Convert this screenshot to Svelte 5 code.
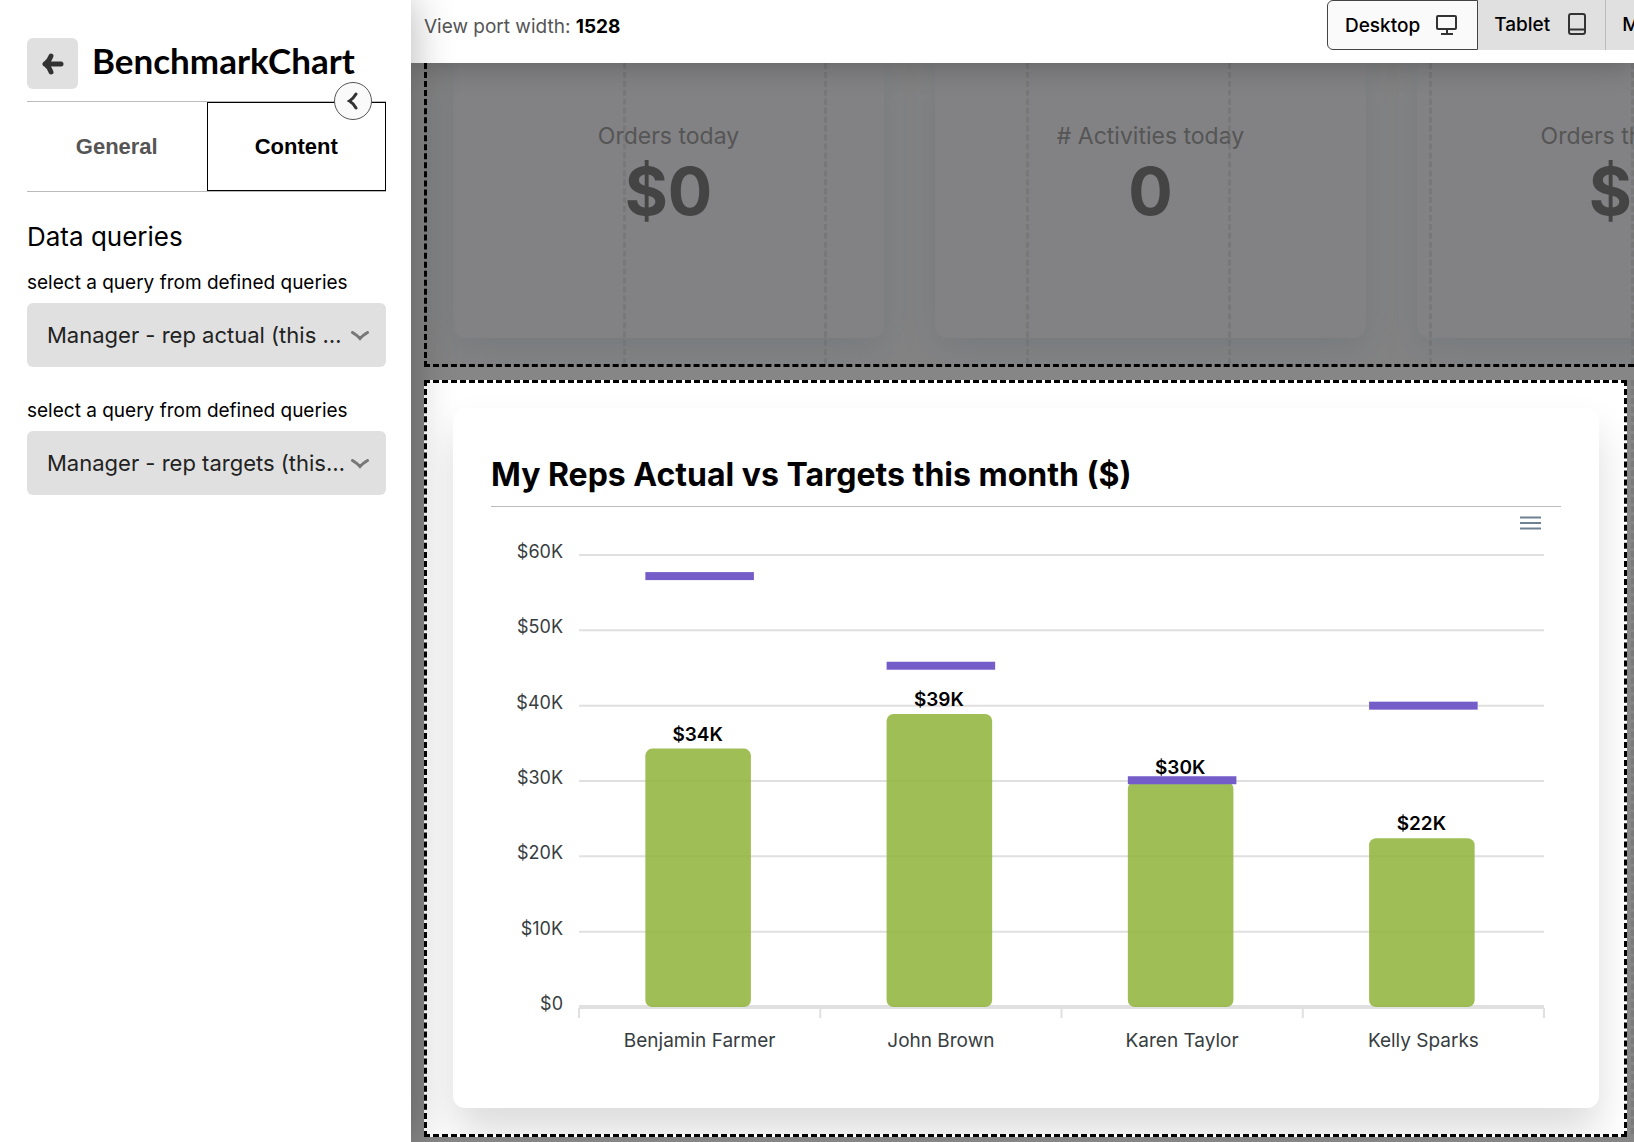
<script>
	const tabs = ['General', 'Content'];
	const devices = ['Desktop', 'Tablet', 'Mobile'];

	const queries = ['Manager - rep actual (this month)', 'Manager - rep targets (this month)'];

	const stats = [
		{ label: 'Orders today', value: '$0' },
		{ label: '# Activities today', value: '0' },
		{ label: 'Orders this week', value: '$0' }
	];

	const reps = [
		{ name: 'Benjamin Farmer', actual: 34.3, target: 57.2 },
		{ name: 'John Brown', actual: 38.9, target: 45.3 },
		{ name: 'Karen Taylor', actual: 29.9, target: 30.1 },
		{ name: 'Kelly Sparks', actual: 22.4, target: 40 }
	];

	const plot = { left: 88, right: 17, top: 48, bottom: 500, height: 563 };
	const maxValue = 60;
	const gridValues = [60, 50, 40, 30, 20, 10, 0];

	let activeTab = $state('Content');
	let device = $state('Desktop');
	let selected = $state([queries[0], queries[1]]);
	let chartWidth = $state(1069);

	let plotWidth = $derived(chartWidth - plot.left - plot.right);
	let step = $derived(plotWidth / reps.length);
	let barWidth = $derived(step * 0.45);

	function y(value) {
		return plot.bottom - (value / maxValue) * (plot.bottom - plot.top);
	}

	function barX(i) {
		return plot.left + i * step + (step - barWidth) / 2;
	}
</script>

<div class="app">
	<aside class="sidebar">
		<header class="sidebar-header">
			<button class="back" aria-label="Back">
				<svg width="24" height="24" viewBox="0 0 24 24">
					<path d="M20 12H4M10 4Q8 9.500 4 12Q8 14.500 10 20" />
				</svg>
			</button>
			<h1>BenchmarkChart</h1>
		</header>

		<div class="tabs" role="tablist">
			{#each tabs as tab}
				<button
					class="tab"
					class:active={activeTab === tab}
					role="tab"
					aria-selected={activeTab === tab}
					onclick={() => (activeTab = tab)}>{tab}</button
				>
			{/each}
			<button class="collapse" aria-label="Collapse panel">
				<svg width="12" height="18" viewBox="0 0 12 18">
					<path d="M9 2Q6 7 2.500 9Q6 11 9 16" />
				</svg>
			</button>
		</div>

		<h2>Data queries</h2>
		{#each selected as _, i}
			<div class="field">
				<label for="query-{i}">select a query from defined queries</label>
				<div class="select-wrap">
					<select id="query-{i}" bind:value={selected[i]}>
						{#each queries as query}
							<option>{query}</option>
						{/each}
					</select>
					<svg class="chevron" width="18" height="10" viewBox="0 0 18 10">
						<path d="M1.500 1.500Q6.500 4.500 9 7.500Q11.500 4.500 16.500 1.500" />
					</svg>
				</div>
			</div>
		{/each}
	</aside>

	<main class="main">
		<div class="topbar">
			<p>View port width: <strong>1528</strong></p>
			<div class="devices">
				{#each devices as name}
					<button class="device" class:active={device === name} onclick={() => (device = name)}>
						{name}
						{#if name === 'Desktop'}
							<svg width="22" height="22" viewBox="0 0 22 22">
								<rect x="1" y="2" width="19" height="13" rx="1" />
								<path d="M11 15v5M5 20h12" />
							</svg>
						{:else if name === 'Tablet'}
							<svg width="22" height="22" viewBox="0 0 22 22">
								<rect x="3" y="1" width="16" height="20" rx="2" />
								<path d="M3 16.500h16" />
							</svg>
						{:else}
							<svg width="22" height="22" viewBox="0 0 22 22">
								<rect x="5" y="1" width="12" height="20" rx="2" />
							</svg>
						{/if}
					</button>
				{/each}
			</div>
		</div>

		<div class="canvas">
			<div class="row">
				<section class="block dimmed">
					{#each stats as stat}
						<div class="card stat">
							<span class="stat-label">{stat.label}</span>
							<span class="stat-value">{stat.value}</span>
						</div>
					{/each}
				</section>
				<div class="columns" aria-hidden="true">
					{#each Array(6) as _}<i></i>{/each}
				</div>
			</div>

			<div class="row">
				<div class="columns" aria-hidden="true">
					{#each Array(6) as _}<i></i>{/each}
				</div>
				<section class="block selected">
					<div class="card chart-card">
						<h3>My Reps Actual vs Targets this month ($)</h3>
						<div class="chart" bind:clientWidth={chartWidth}>
							<button class="chart-menu" aria-label="Chart menu">
								<svg width="24" height="18" viewBox="0 0 24 18">
									<path d="M1 3.500h21M1 9h21M1 14.500h21" />
								</svg>
							</button>
							<svg width={chartWidth} height={plot.height} role="img" aria-label="Actual vs targets">
								{#each gridValues as value}
									<line
										class="grid"
										class:base={value === 0}
										x1={plot.left}
										x2={plot.left + plotWidth}
										y1={y(value)}
										y2={y(value)}
									/>
									<text class="axis" x={plot.left - 16} y={y(value) + 3} text-anchor="end"
										>${value}{value ? 'K' : ''}</text
									>
								{/each}
								{#each Array(reps.length + 1) as _, i}
									<line
										class="tick"
										x1={plot.left + i * step}
										x2={plot.left + i * step}
										y1={plot.bottom + 1}
										y2={plot.bottom + 11}
									/>
								{/each}
								{#each reps as rep, i}
									<rect
										class="bar"
										x={barX(i)}
										y={y(rep.actual)}
										width={barWidth - 3}
										height={plot.bottom - y(rep.actual)}
										rx="7"
									/>
									<text
										class="value"
										x={barX(i) + barWidth / 2 - 2}
										y={y(rep.actual) - 8}
										text-anchor="middle">${Math.round(rep.actual)}K</text
									>
									<rect class="target" x={barX(i)} y={y(rep.target) - 4} width={barWidth} height="8" />
									<text
										class="name"
										x={plot.left + (i + 0.5) * step}
										y={plot.bottom + 40}
										text-anchor="middle">{rep.name}</text
									>
								{/each}
							</svg>
						</div>
					</div>
				</section>
			</div>
		</div>
	</main>
</div>

<style>
	:global(body) {
		margin: 0;
		overflow-x: hidden;
	}

	.app {
		display: flex;
		min-height: 100vh;
		font-family: Inter, sans-serif;
		color: #000;
		background: #868686;
	}

	button {
		padding: 0;
		border: 0;
		font-family: inherit;
		cursor: pointer;
	}

	svg {
		display: block;
		fill: none;
	}

	/* Sidebar */
	.sidebar {
		position: relative;
		z-index: 3;
		flex: none;
		box-sizing: border-box;
		width: 411px;
		padding: 38px 25px 38px 27px;
		background: #fff;
		box-shadow: 0 0 40px rgba(0, 0, 0, 0.3);
	}

	.sidebar-header {
		display: flex;
		gap: 14px;
		margin-bottom: 12px;
	}

	.back {
		display: grid;
		place-items: center;
		width: 51px;
		height: 51px;
		border-radius: 6px;
		background: #e0e0e0;
	}

	.back path {
		stroke: #333;
		stroke-width: 5;
		stroke-linecap: round;
		stroke-linejoin: round;
	}

	h1 {
		margin: 0;
		font: 700 35px/44px Lato, sans-serif;
	}

	.tabs {
		position: relative;
		display: grid;
		grid-template-columns: 1fr 1fr;
		border-top: 1px solid #bbb;
		border-bottom: 1px solid #bbb;
	}

	.tab {
		height: 89px;
		background: #fff;
		color: #555;
		font: 700 22px/28px 'Liberation Sans', sans-serif;
	}

	.tab.active {
		border: 1px solid #000;
		color: #000;
	}

	.collapse {
		position: absolute;
		top: -20px;
		right: 14px;
		display: grid;
		place-items: center;
		width: 38px;
		height: 38px;
		border: 1px solid #555;
		border-radius: 50%;
		background: #fafafa;
	}

	.collapse path {
		stroke: #333;
		stroke-width: 3;
		stroke-linecap: round;
	}

	h2 {
		margin: 27px 0 14px;
		font-size: 26px;
		font-weight: 400;
		line-height: 36px;
	}

	.field {
		margin-bottom: 30px;
	}

	.field label {
		display: block;
		margin-bottom: 6px;
		font-size: 19px;
		line-height: 28px;
	}

	.select-wrap {
		position: relative;
	}

	select {
		display: block;
		width: 100%;
		height: 64px;
		padding: 0 36px 0 20px;
		border: 0;
		border-radius: 6px;
		appearance: none;
		background: #e0e0e0;
		color: #222;
		font: 400 22px/30px Inter, sans-serif;
		text-overflow: ellipsis;
		white-space: nowrap;
		overflow: hidden;
	}

	.chevron {
		position: absolute;
		top: 28px;
		right: 17px;
		pointer-events: none;
	}

	.chevron path {
		stroke: #777;
		stroke-width: 3;
		stroke-linecap: round;
	}

	/* Top bar */
	.main {
		flex: 1;
		min-width: 0;
		overflow: hidden;
	}

	.topbar {
		position: relative;
		z-index: 2;
		display: flex;
		justify-content: space-between;
		height: 63px;
		padding-left: 13px;
		background: #fff;
		box-shadow: 0 0 30px rgba(0, 0, 0, 0.3);
	}

	.topbar p {
		margin: 0;
		color: #555;
		font-size: 19px;
		line-height: 54px;
	}

	.topbar strong {
		color: #000;
	}

	.devices {
		display: flex;
		width: 307px;
		height: 50px;
		overflow: hidden;
	}

	.device {
		display: flex;
		flex: none;
		align-items: center;
		gap: 16px;
		padding: 0 17px 2px 16px;
		border-right: 1px solid #bbb;
		background: #e0e0e0;
		color: #000;
		font-size: 19px;
		font-weight: 500;
	}

	.device.active {
		padding: 0 19px 0 17px;
		border: 1px solid #444;
		border-radius: 6px 0 0 6px;
		background: #fafafa;
	}

	.device svg {
		stroke: #333;
		stroke-width: 2;
	}

	/* Canvas */
	.canvas {
		display: grid;
		gap: 13px;
		padding: 0 0 5px 13px;
	}

	.row {
		position: relative;
		min-width: 0;
		overflow: hidden;
	}

	.block {
		position: relative;
		border: 3px dashed #000;
		overflow: hidden;
	}

	.dimmed {
		display: grid;
		grid-auto-flow: column;
		grid-auto-columns: 431px;
		gap: 51px;
		padding: 0 0 26px 26px;
		border-top: 0;
		border-right: 0;
		background: #838384;
	}

	.selected {
		margin-right: 7px;
		padding: 25px 25px 26px 26px;
		background: #fff;
	}

	.columns {
		position: absolute;
		inset: 0 0 3px;
		display: grid;
		grid-template-columns: repeat(6, 1fr);
		pointer-events: none;
	}

	.columns i {
		border-right: 3px dashed rgba(110, 110, 110, 0.5);
	}

	.card {
		border-radius: 12px;
		background: #fff;
		box-shadow: 0 24px 40px rgba(0, 0, 0, 0.14);
	}

	.stat {
		display: flex;
		flex-direction: column;
		align-items: center;
		height: 217px;
		padding-top: 58px;
		border-radius: 0 0 12px 12px;
		background: #828284;
		box-shadow: 0 10px 30px rgba(100, 110, 115, 0.4);
	}

	.stat-label {
		color: #555;
		font-size: 23px;
		line-height: 30px;
	}

	.stat-value {
		color: #444;
		font-size: 66px;
		font-weight: 700;
		line-height: 80px;
	}

	.chart-card {
		padding: 38px;
	}

	h3 {
		margin: 0;
		padding: 4px 0 6px;
		border-bottom: 1px solid #bbb;
		font-size: 32px;
		font-weight: 700;
		line-height: 50px;
	}

	.chart {
		position: relative;
		overflow: hidden;
	}

	.chart-menu {
		position: absolute;
		top: 7px;
		right: 18px;
		background: none;
	}

	.chart-menu path {
		stroke: #6e8192;
		stroke-width: 2;
	}

	.grid {
		stroke: #e0e0e0;
		stroke-width: 2;
	}

	.grid.base {
		stroke-width: 4;
	}

	.tick {
		stroke: #e0e0e0;
		stroke-width: 2;
	}

	.axis,
	.name {
		fill: #373d3f;
		font-size: 18px;
	}

	.name {
		font-size: 19px;
	}

	.bar {
		fill: #8fb339;
		fill-opacity: 0.86;
	}

	.value {
		fill: #000;
		font-size: 19px;
		font-weight: 600;
	}

	.target {
		fill: #745dc9;
	}
</style>
